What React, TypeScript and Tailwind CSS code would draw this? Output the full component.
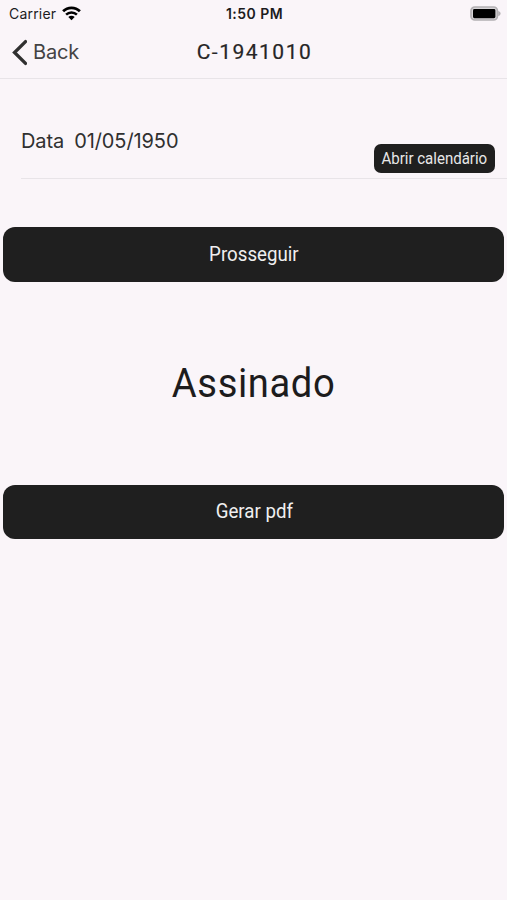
import React from 'react';

interface ActionButtonProps {
  label: string;
}

const WifiIcon = () => (
  <svg width="19" height="15" viewBox="0 0 19 15" fill="none" aria-hidden="true">
    <path d="M1.1 5.3C5.7 0.6 13.3 0.6 17.9 5.3" stroke="#000" strokeWidth="2.7" />
    <path d="M4.1 8.6C7.1 5.7 11.9 5.7 14.9 8.6" stroke="#000" strokeWidth="2.5" />
    <path d="M6.3 10.9C8.1 9.3 10.9 9.3 12.7 10.9L9.5 14.2Z" fill="#000" />
  </svg>
);

const BatteryIcon = () => (
  <svg width="31" height="15" viewBox="0 0 31 15" aria-hidden="true">
    <rect x="1" y="1" width="26.4" height="13" rx="3.8" fill="#d8d5d8" stroke="#b3b0b3" strokeWidth="1.7" />
    <rect x="3" y="3" width="22.4" height="9.2" rx="1.4" fill="#000" />
    <path d="M28.2 4.9C31.4 5.8 31.4 9.2 28.2 10.1Z" fill="#b3b0b3" />
  </svg>
);

const BackIcon = () => (
  <svg width="16" height="27" viewBox="0 0 16 27" fill="none" aria-hidden="true">
    <path d="M14.5 2.6L3.5 13.5L14.5 24.4" stroke="#303030" strokeWidth="3.3" strokeLinecap="round" />
  </svg>
);

const StatusBar = () => (
  <div className="grid h-[27px] grid-cols-3 items-center pl-[9px] pr-[6px] font-['Inter',sans-serif] text-[#1c1c1e]">
    <div className="flex items-center gap-[5.5px]">
      <span className="text-[14px] tracking-[0.2px]">Carrier</span>
      <WifiIcon />
    </div>
    <span className="pr-px text-center text-[14px] font-semibold tracking-[0.45px]">1:50 PM</span>
    <div className="flex justify-end">
      <BatteryIcon />
    </div>
  </div>
);

const ActionButton = ({ label }: ActionButtonProps) => (
  <button className="block h-[54.5px] w-full rounded-[12px] bg-[#1f1f1f] pb-px font-['Roboto',sans-serif] text-[20px] text-[#f0eff0]">
    <span className="ml-px inline-block scale-x-[0.935]">{label}</span>
  </button>
);

const App = () => {
  return (
    <div className="min-h-screen bg-[#faf5f9]">
      <StatusBar />

      <header className="grid h-[52px] grid-cols-3 items-center border-b border-[#e8e4e8] px-[11px]">
        <button className="flex items-center gap-[6px] pb-px font-['Inter',sans-serif] text-[20px] tracking-[-0.2px] text-[#444344]">
          <BackIcon />
          <span>Back</span>
        </button>
        <h1 className="pl-[2px] text-center font-['Roboto',sans-serif] text-[21px] tracking-[1.5px] text-[#262526]">
          <span className="inline-block [-webkit-text-stroke:0.2px_#262526]">C-1941010</span>
        </h1>
      </header>

      <main>
        <div className="ml-[21px] flex h-[100px] justify-between border-b border-[#e8e4e8] pr-[12px]">
          <div className="flex gap-[10px] pt-[47px] font-['Inter',sans-serif] text-[20px] tracking-[-0.1px] text-[#303030]">
            <span>Data</span>
            <span>01/05/1950</span>
          </div>
          <button className="mt-[65px] h-[29px] w-[121px] rounded-[7px] bg-[#1f1f1f] font-['Roboto',sans-serif] text-[16px] text-[#e8e7e8]">
            <span className="-mx-2 inline-block scale-x-[0.94]">Abrir calendário</span>
          </button>
        </div>

        <div className="px-[3px] pt-[48px]">
          <ActionButton label="Prosseguir" />
          <p className="flex h-[203px] items-center justify-center pl-px pt-[1.5px] font-['Roboto',sans-serif] text-[40px] tracking-[0.6px] text-[#1d1c1d]">
            <span className="scale-x-[0.955]">Assinado</span>
          </p>
          <ActionButton label="Gerar pdf" />
        </div>
      </main>
    </div>
  );
};

export default App;
